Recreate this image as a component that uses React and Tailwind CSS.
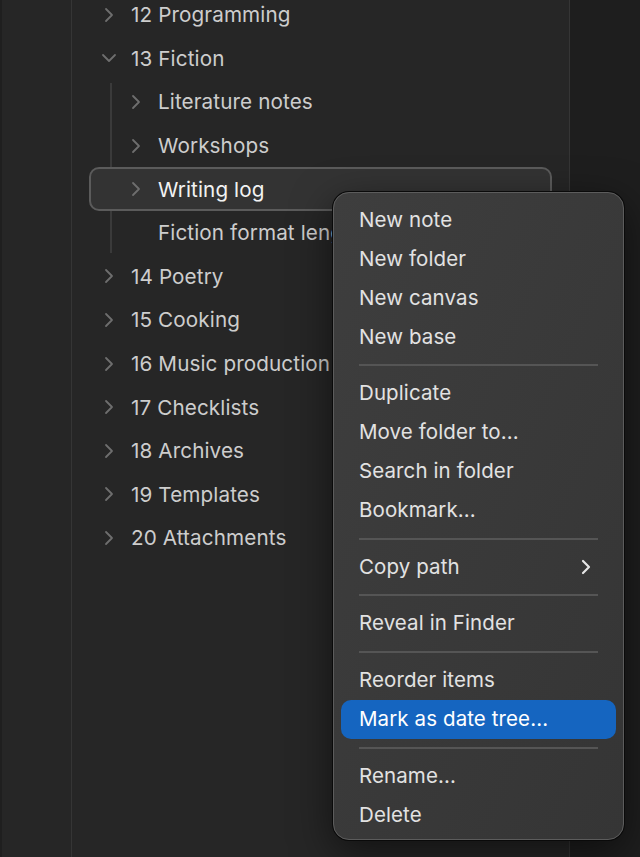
import React from "react";

const Chevron = ({ down = false, className = "" }) =>
  down ? (
    <svg width="16" height="10" viewBox="0 0 16 10" className={className}>
      <path d="M2 2 L8 8 L14 2" fill="none" stroke="currentColor" strokeWidth="1.8" strokeLinecap="round" strokeLinejoin="round" />
    </svg>
  ) : (
    <svg width="10" height="16" viewBox="0 0 10 16" className={className}>
      <path d="M2 2 L8 8 L2 14" fill="none" stroke="currentColor" strokeWidth="1.8" strokeLinecap="round" strokeLinejoin="round" />
    </svg>
  );

function Row({ label, level = 0, chevron = "right", selected = false }) {
  return (
    <div
      className={
        "h-[43.6px] flex items-center mx-[17px] rounded-[10px] " +
        (selected ? "border-2 border-[#5b5b5b] bg-[#333333]" : "border-2 border-transparent")
      }
    >
      <div className={level === 0 ? "w-[13px]" : "w-[40px]"} />
      <div className="w-[27px] flex items-center text-[#6e6e6e]">
        {chevron === "right" && <Chevron />}
        {chevron === "down" && <Chevron down className="-ml-[3px]" />}
      </div>
      <span
        className={
          "text-[20.7px] tracking-[0.1px] whitespace-nowrap " + (selected ? "text-[#f2f2f2]" : "text-[#cdcdcd]")
        }
      >
        {label}
      </span>
    </div>
  );
}

function Item({ label, active = false, sub = false }) {
  return (
    <div
      className={
        "h-[39px] mx-[7px] px-[18px] flex items-center justify-between rounded-[10px] text-[20.5px] tracking-[0.1px] " +
        (active ? "bg-[#1565c0] text-white" : "text-[#e2e2e2]")
      }
    >
      <span>{label}</span>
      {sub && (
        <svg width="12" height="16" viewBox="0 0 12 16" className="mr-[6px] text-[#e6e6e6]">
          <path d="M3 2 L9 8 L3 14" fill="none" stroke="currentColor" strokeWidth="2.2" strokeLinecap="round" strokeLinejoin="round" />
        </svg>
      )}
    </div>
  );
}

function Sep() {
  return (
    <div className="h-[17.6px] flex items-center px-[25px]">
      <div className="h-[2px] w-full bg-[#555555]" />
    </div>
  );
}

export default function App() {
  return (
    <div
      className="relative w-[640px] h-[857px] overflow-hidden flex bg-[#262626]"
      style={{ fontFamily: "Inter, 'Noto Sans', sans-serif" }}
    >
      <div className="w-[72px] h-full border-l-2 border-l-[#1f1f1f] border-r border-r-[#353535] bg-[#262626]" />
      <div className="w-[498px] h-full border-r border-r-[#353535] bg-[#262626]">
        <div className="-mt-[7px]">
          <Row label="12 Programming" />
          <Row label="13 Fiction" chevron="down" />
          <div className="relative">
            <div className="absolute left-[38px] top-[3px] bottom-[2px] w-[2px] bg-[#3a3a3a]" />
            <div className="relative">
              <Row label="Literature notes" level={1} />
              <Row label="Workshops" level={1} />
              <Row label="Writing log" level={1} selected />
              <Row label="Fiction format length" level={1} chevron="none" />
            </div>
          </div>
          <Row label="14 Poetry" />
          <Row label="15 Cooking" />
          <Row label="16 Music production" />
          <Row label="17 Checklists" />
          <Row label="18 Archives" />
          <Row label="19 Templates" />
          <Row label="20 Attachments" />
        </div>
      </div>
      <div className="flex-1 h-full bg-[#1e1e1e]" />

      <div className="absolute left-[333px] top-[192px] w-[291px] pt-[7.5px] pb-[5px] rounded-[16px] border border-[#5c5c5c] bg-gradient-to-br from-[#3e3e3e] to-[#353535] shadow-[0_0_0_1px_#0a0a0a,0_12px_40px_rgba(0,0,0,0.55)]">
        <Item label="New note" />
        <Item label="New folder" />
        <Item label="New canvas" />
        <Item label="New base" />
        <Sep />
        <Item label="Duplicate" />
        <Item label="Move folder to..." />
        <Item label="Search in folder" />
        <Item label="Bookmark..." />
        <Sep />
        <Item label="Copy path" sub />
        <Sep />
        <Item label="Reveal in Finder" />
        <Sep />
        <Item label="Reorder items" />
        <Item label="Mark as date tree..." active />
        <Sep />
        <Item label="Rename..." />
        <Item label="Delete" />
      </div>
    </div>
  );
}
